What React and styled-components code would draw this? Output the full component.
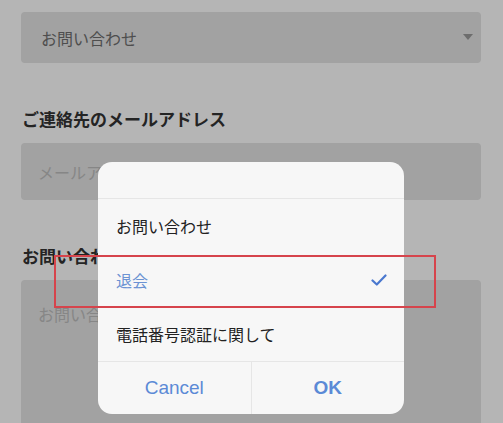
import React from 'react';
import styled, { createGlobalStyle } from 'styled-components';

const GlobalStyle = createGlobalStyle`
  html, body {
    margin: 0;
    padding: 0;
    background: #fff;
    font-family: "Noto Sans CJK JP", "Liberation Sans", sans-serif;
  }
`;

const PageStyled = styled.div`
  position: relative;
  width: 503px;
  height: 423px;
  overflow: hidden;
  box-sizing: border-box;
  padding: 12px 22px 0 21px;
  background: #fff;
`;

const SelectStyled = styled.div`
  position: relative;
  display: flex;
  align-items: center;
  height: 51px;
  padding: 0 20px;
  border-radius: 4px;
  background: #e4e4e4;
  color: #6f6f6f;
  font-size: 16px;
`;

const CaretStyled = styled.span`
  position: absolute;
  right: 8px;
  top: 22px;
  width: 0;
  height: 0;
  border-left: 5px solid transparent;
  border-right: 5px solid transparent;
  border-top: 6px solid #9a9a9a;
`;

const LabelStyled = styled.div`
  margin: ${(p) => p.top}px 0 0 1px;
  height: 24px;
  line-height: 24px;
  color: #333;
  font-size: 17px;
  font-weight: bold;
`;

const InputStyled = styled.div`
  display: flex;
  align-items: ${(p) => (p.multiline ? 'flex-start' : 'center')};
  height: ${(p) => p.height}px;
  margin-top: ${(p) => p.top}px;
  padding: ${(p) => (p.multiline ? '22px 17px' : '0 17px')};
  box-sizing: border-box;
  border-radius: 4px;
  background: #e4e4e4;
  color: #bdbdbd;
  font-size: 16px;
`;

const OverlayStyled = styled.div`
  position: absolute;
  inset: 0;
  background: rgba(0, 0, 0, 0.29);
`;

const DialogStyled = styled.div`
  position: absolute;
  left: 98px;
  top: 162px;
  width: 306px;
  border-radius: 14px;
  background: #f7f7f7;
  overflow: hidden;
`;

const DialogHeadStyled = styled.div`
  height: 36px;
  border-bottom: 1px solid #e6e6e6;
`;

const OptionStyled = styled.div`
  display: flex;
  align-items: center;
  justify-content: space-between;
  height: 54px;
  padding: 0 17px 0 18px;
  font-size: 16px;
  color: ${(p) => (p.active ? '#6c93d3' : '#222')};
`;

const ButtonsStyled = styled.div`
  display: flex;
  height: 52px;
  border-top: 1px solid #e6e6e6;
`;

const ButtonStyled = styled.div`
  flex: 1;
  display: flex;
  align-items: center;
  justify-content: center;
  font-family: "Liberation Sans", sans-serif;
  font-size: 19px;
  font-weight: ${(p) => (p.primary ? 'bold' : 'normal')};
  color: #5b8ad6;
  & + & {
    border-left: 1px solid #e6e6e6;
  }
`;

const HighlightStyled = styled.div`
  position: absolute;
  left: 54px;
  top: 255px;
  width: 382px;
  height: 53px;
  box-sizing: border-box;
  border: 2px solid #d6444c;
`;

const Check = () => (
  <svg width="16" height="12" viewBox="0 0 16 12" fill="none">
    <path d="M1.5 6.5 L5.8 10.5 L14.5 1.5" stroke="#4a78cf" strokeWidth="2.2" strokeLinecap="round" strokeLinejoin="round" />
  </svg>
);

const options = ['お問い合わせ', '退会', '電話番号認証に関して'];

const App = () => (
  <PageStyled>
    <GlobalStyle />
    <SelectStyled>
      お問い合わせ
      <CaretStyled />
    </SelectStyled>
    <LabelStyled top={44}>ご連絡先のメールアドレス</LabelStyled>
    <InputStyled top={12} height={57}>メールアドレス</InputStyled>
    <LabelStyled top={44}>お問い合わせ内容</LabelStyled>
    <InputStyled top={12} height={160} multiline>お問い合わせ内容</InputStyled>
    <OverlayStyled />
    <DialogStyled>
      <DialogHeadStyled />
      {options.map((label) => (
        <OptionStyled key={label} active={label === '退会'}>
          {label}
          {label === '退会' && <Check />}
        </OptionStyled>
      ))}
      <ButtonsStyled>
        <ButtonStyled>Cancel</ButtonStyled>
        <ButtonStyled primary>OK</ButtonStyled>
      </ButtonsStyled>
    </DialogStyled>
    <HighlightStyled />
  </PageStyled>
);

export default App;
